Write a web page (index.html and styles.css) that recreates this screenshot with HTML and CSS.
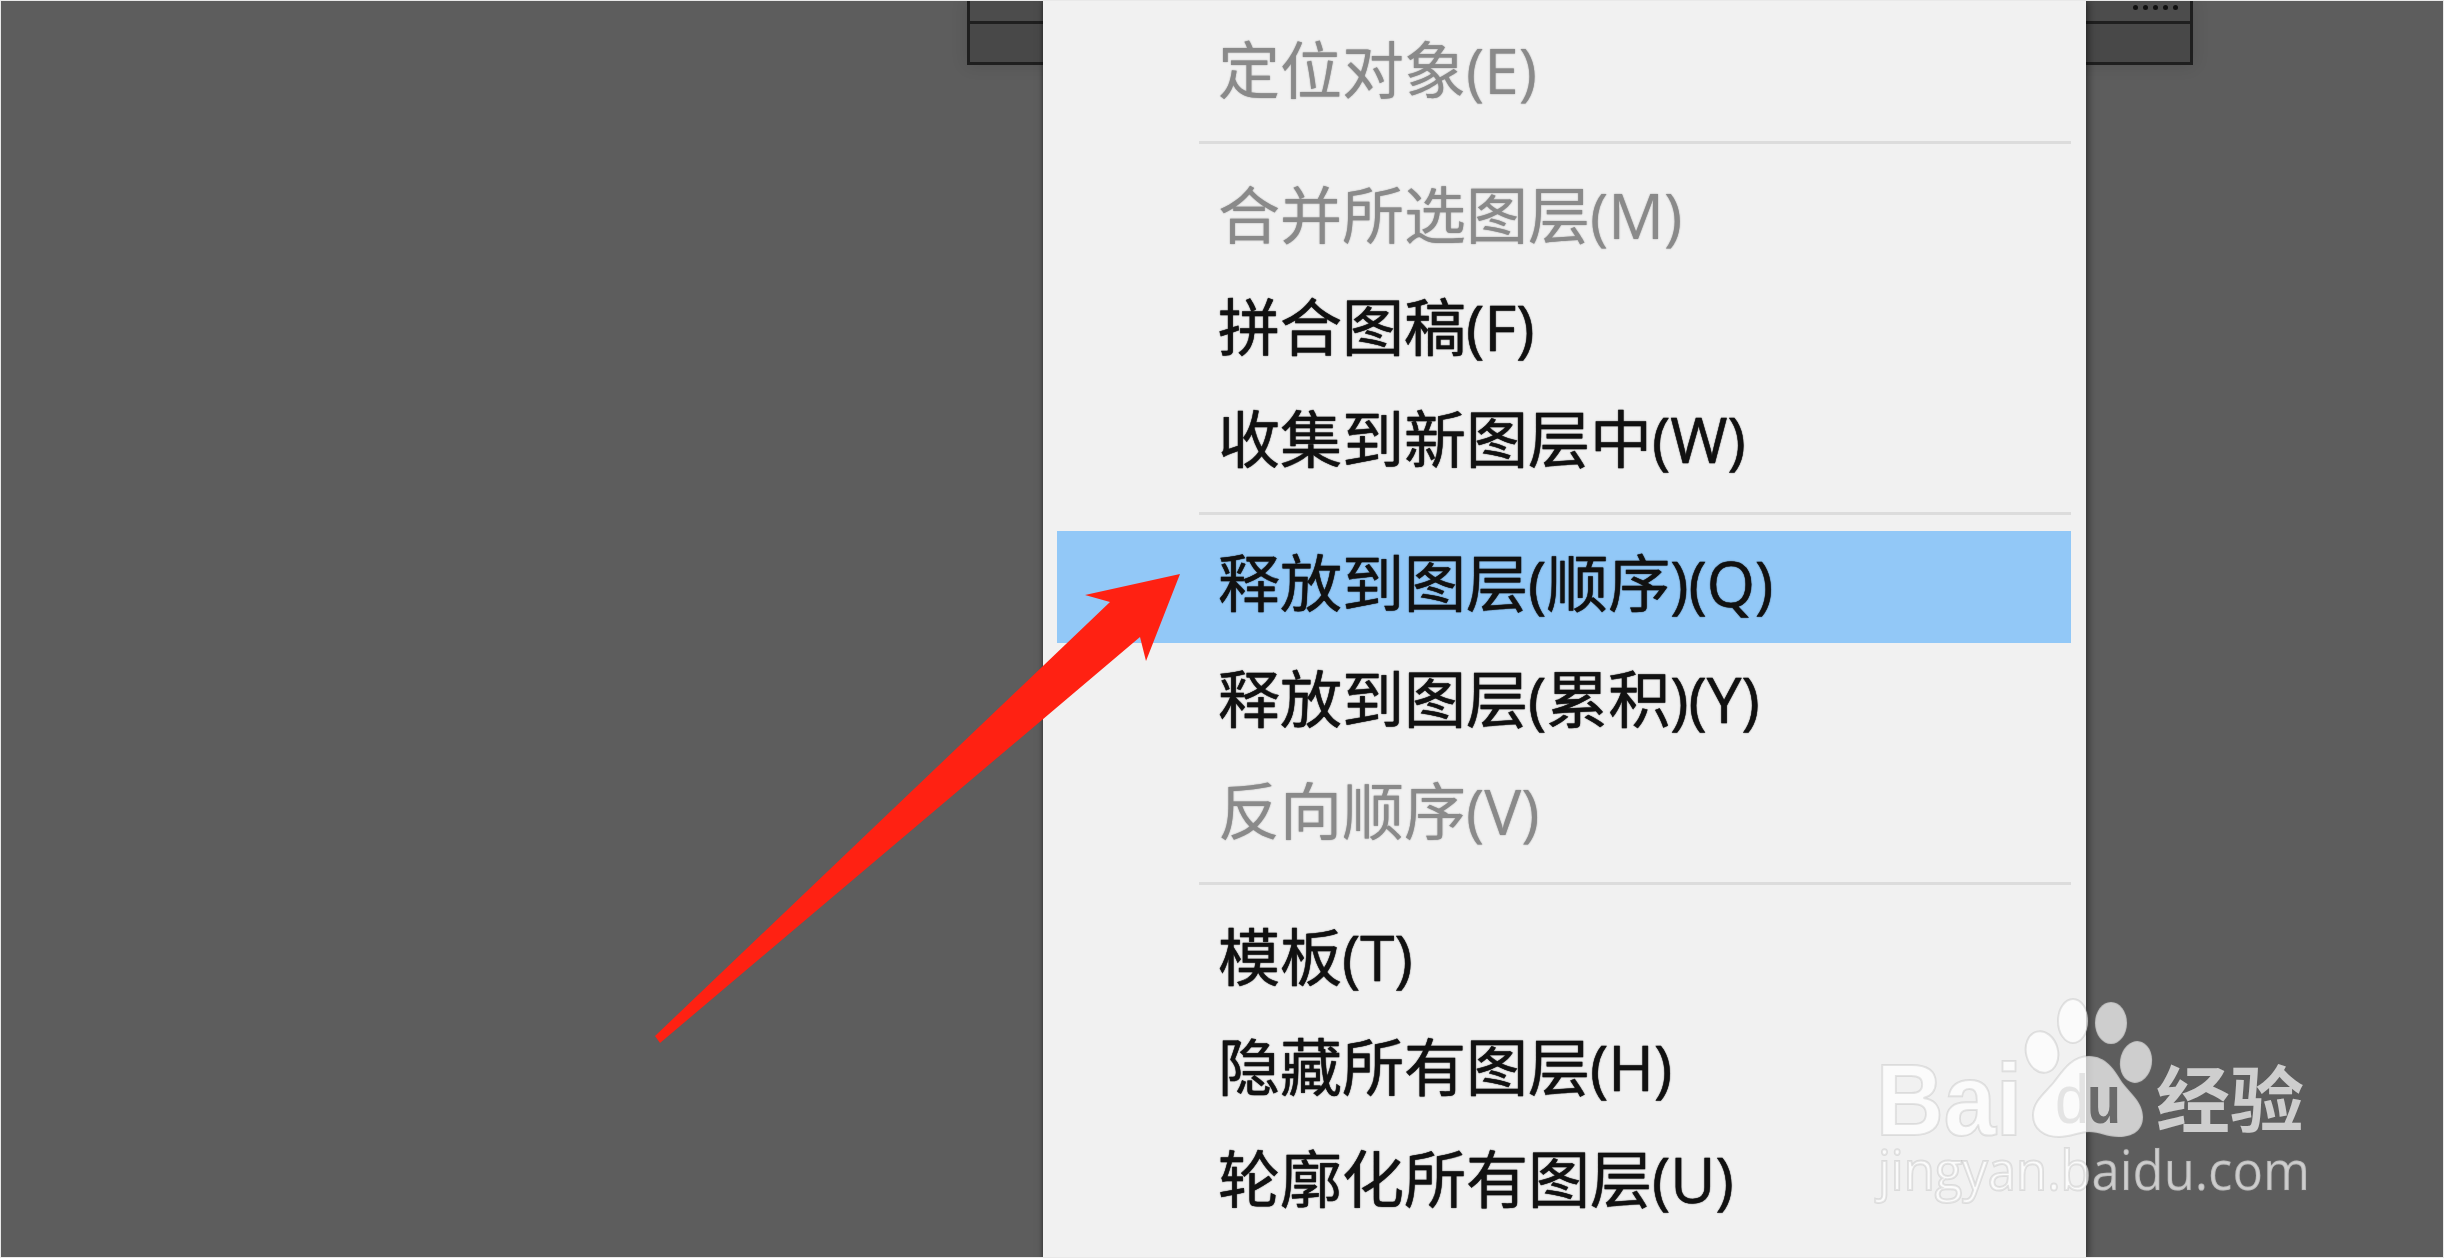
FILE: index.html
```html
<!DOCTYPE html>
<html lang="zh-CN">
<head>
<meta charset="utf-8">
<title>释放到图层</title>
<link rel="stylesheet" href="styles.css">
</head>
<body>
<div class="stage">
  <div class="panel">
    <div class="panel-top"><span class="dots"><i></i><i></i><i></i><i></i><i></i></span></div>
    <div class="panel-bottom"></div>
  </div>
  <div class="menu">
    <div class="item off">定位对象(E)</div>
    <div class="sep sep-a"></div>
    <div class="item off">合并所选图层(M)</div>
    <div class="item">拼合图稿(F)</div>
    <div class="item">收集到新图层中(W)</div>
    <div class="sep sep-b"></div>
    <div class="item active">释放到图层(顺序)(Q)</div>
    <div class="item">释放到图层(累积)(Y)</div>
    <div class="item off">反向顺序(V)</div>
    <div class="sep sep-c"></div>
    <div class="item lower">模板(T)</div>
    <div class="item">隐藏所有图层(H)</div>
    <div class="item">轮廓化所有图层(U)</div>
  </div>
  <svg class="overlay" viewBox="0 0 2444 1258" aria-hidden="true">
    <polygon class="arrow" points="1180,574 1146,661 1140,637 660,1043 655,1036 1110,602 1085,595"/>
    <g class="wm">
      <ellipse cx="2042" cy="1052" rx="16" ry="21" transform="rotate(-14 2042 1052)"/>
      <ellipse cx="2073" cy="1021" rx="15" ry="22"/>
      <ellipse cx="2111" cy="1023" rx="16" ry="21"/>
      <ellipse cx="2136" cy="1062" rx="16" ry="21" transform="rotate(8 2136 1062)"/>
      <path d="M2089 1056c17 0 26 14 33 26 8 11 21 20 21 35 0 14-11 20-24 20-12 0-20-5-30-5s-18 5-30 5c-15 0-26-8-26-22 0-14 13-23 21-33 9-12 18-26 35-26z"/>
      <text class="wm-bai" x="1876" y="1135" textLength="146" lengthAdjust="spacingAndGlyphs">Bai</text>
      <text class="wm-cn" x="2156" y="1126" textLength="148" lengthAdjust="spacingAndGlyphs">经验</text>
      <text class="wm-url" x="1878" y="1190" textLength="432" lengthAdjust="spacingAndGlyphs">jingyan.baidu.com</text>
    </g>
    <text class="wm-d" x="2055" y="1123" textLength="34" lengthAdjust="spacingAndGlyphs">d</text>
    <text class="wm-u" x="2087" y="1123" textLength="34" lengthAdjust="spacingAndGlyphs">u</text>
  </svg>
</div>
</body>
</html>
```
FILE: styles.css
```css
html, body {
  margin: 0;
  padding: 0;
}
.stage {
  position: relative;
  box-sizing: border-box;
  width: 2444px;
  height: 1258px;
  padding-left: 1042px;
  overflow: hidden;
  background: #5d5d5d;
  border: 1px solid #e9e9e9;
}
.panel {
  position: absolute;
  top: -1px;
  left: 966px;
  width: 1226px;
  height: 65px;
  box-sizing: border-box;
  display: flex;
  flex-direction: column;
  border: 3px solid #1f1f1f;
  border-top: 0;
  background: #484848;
  box-shadow: 0 0 16px rgba(0, 0, 0, .12);
  filter: blur(.6px);
}
.panel-top {
  height: 21px;
  display: flex;
  justify-content: flex-end;
  align-items: center;
  border-bottom: 3px solid #1f1f1f;
  background: #4c4c4c;
  padding-right: 12px;
}
.dots {
  display: flex;
  gap: 5px;
  margin-top: -6px;
}
.dots i {
  width: 5px;
  height: 5px;
  border-radius: 50%;
  background: #111;
}
.panel-bottom {
  flex: 1;
}
.menu {
  position: relative;
  box-sizing: border-box;
  width: 1043px;
  height: 1258px;
  padding: 13px 15px 0 14px;
  background: #f1f1f1;
  box-shadow: 2px 0 8px rgba(0, 0, 0, .5), -1px 0 3px rgba(0, 0, 0, .2);
}
.item {
  height: 112px;
  line-height: 112px;
  padding-left: 161px;
  font-family: "Open Sans", "Noto Sans CJK SC", sans-serif;
  font-size: 62px;
  color: #111;
  white-space: nowrap;
  -webkit-text-stroke: .5px currentColor;
  text-shadow: 0 0 1.5px currentColor;
}
.item.off {
  color: #8a8a8a;
  -webkit-text-stroke: 0;
}
.item.active {
  background: #92c8f7;
  line-height: 105px;
}
.item.lower {
  line-height: 117px;
}
.sep {
  height: 32px;
  display: flex;
  align-items: center;
  padding-left: 142px;
}
.sep::before {
  content: "";
  flex: 1;
  height: 3px;
  background: #dcdcdc;
}
.sep-a {
  height: 33px;
}
.sep-b {
  height: 36px;
}
.overlay {
  position: absolute;
  top: -1px;
  left: -1px;
  width: 2444px;
  height: 1258px;
}
.arrow {
  fill: #ff2112;
}
.wm {
  fill: rgba(255, 255, 255, .7);
  stroke: rgba(120, 120, 120, .18);
  stroke-width: 2;
}
.wm-bai {
  font-family: "Liberation Sans", sans-serif;
  font-size: 102px;
  font-weight: 700;
}
.wm-cn {
  font-family: "Noto Sans CJK SC", sans-serif;
  font-size: 72px;
  font-weight: 700;
  stroke: none;
}
.wm-url {
  font-family: "Open Sans", sans-serif;
  font-size: 54px;
}
.wm-d, .wm-u {
  font-family: "Liberation Sans", sans-serif;
  font-size: 68px;
}
.wm-d {
  fill: rgba(225, 225, 225, .9);
}
.wm-u {
  fill: #6a6a6a;
  font-weight: 700;
}
```
